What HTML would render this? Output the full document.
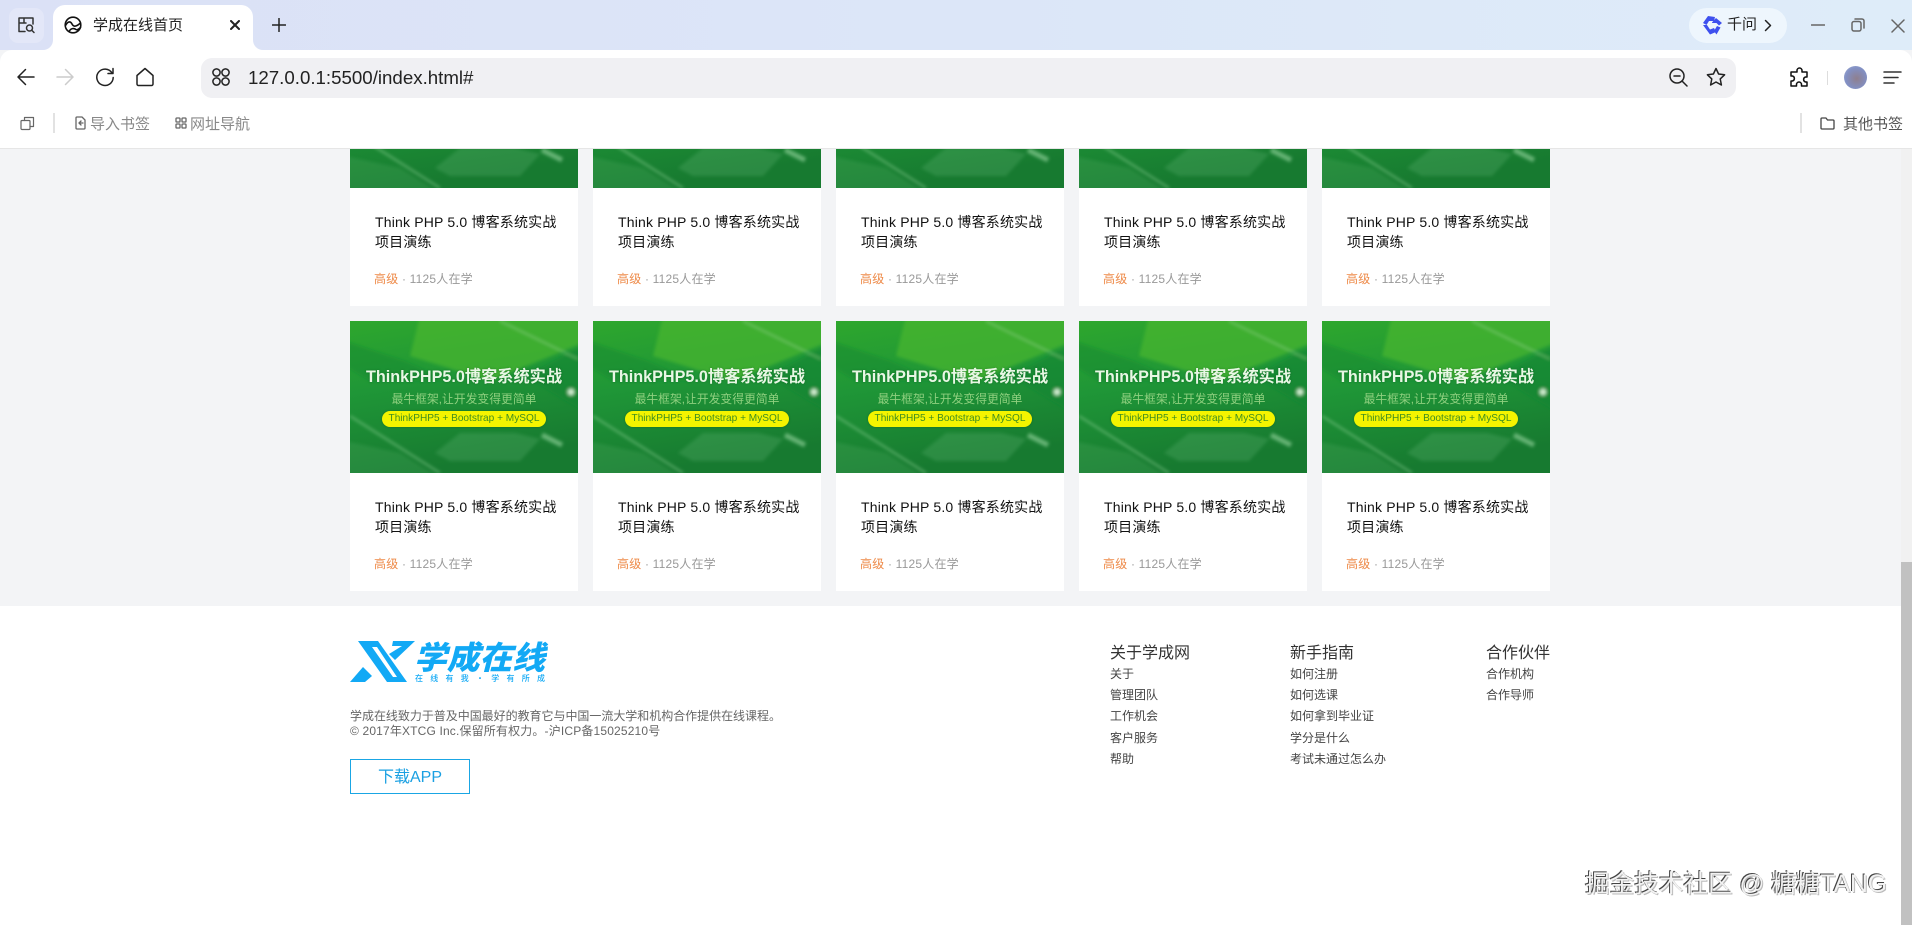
<!DOCTYPE html>
<html lang="zh-CN">
<head>
<meta charset="utf-8">
<title>学成在线首页</title>
<style>
*{margin:0;padding:0;box-sizing:border-box}
html,body{width:1912px;height:925px;overflow:hidden;background:#f3f4f6;font-family:"Liberation Sans","Noto Sans CJK SC",sans-serif}
.abs{position:absolute;white-space:nowrap}
#strip{position:absolute;left:0;top:0;width:1912px;height:50px;background:linear-gradient(90deg,#dbe1f6,#dce6f8 50%,#deecf9)}
#tool{position:absolute;left:0;top:50px;width:1912px;height:99px;background:#fff;border-bottom:1px solid #e6e6e6;border-radius:12px 12px 0 0}
#chrome{position:absolute;left:0;top:0;width:1912px;height:149px;z-index:5}
#tab{position:absolute;left:53px;top:5px;width:200px;height:46px;background:#fff;border-radius:12px 12px 0 0}
#addr{position:absolute;left:201px;top:58px;width:1535px;height:40px;background:#f0f0f3;border-radius:11px}
svg.i{position:absolute;fill:none;stroke:#222;stroke-width:1.5;stroke-linecap:round;stroke-linejoin:round}
.bm{position:absolute;top:115px;font-size:15px;line-height:19px;color:#888;white-space:nowrap}
.card{position:absolute;width:228px;height:270px;background:#fff}
.pic{position:absolute;left:0;top:0;width:228px;height:152px;overflow:hidden;text-align:center;background:#1d9433}
.pic svg{position:absolute;left:0;top:0}
.h{position:absolute;left:0;top:45px;width:228px;font-size:16.2px;line-height:22px;font-weight:700;color:#e8f7e4;white-space:nowrap;text-shadow:0 0 2px rgba(0,70,20,.4)}
.s{position:absolute;left:0;top:71px;width:228px;font-size:11.8px;line-height:15px;color:#8fd07f;white-space:nowrap}
.p{position:absolute;left:32px;top:90px;width:164px;height:16px;border-radius:8px;background:#f4f400;color:#3f8f20;font-size:10.1px;line-height:16px;white-space:nowrap;box-shadow:0 0 2px rgba(20,80,20,.5)}
.t{position:absolute;left:25px;top:176px;width:190px;font-size:14px;line-height:20px;color:#111;letter-spacing:.18px}
.m{position:absolute;left:24px;top:235px;font-size:12px;line-height:16px;color:#999;white-space:nowrap;letter-spacing:.2px}
.m b{font-weight:400;color:#ee8a48}
#foot{position:absolute;left:0;top:606px;width:1901px;height:319px;background:#fff}
.f{position:absolute;font-size:12px;line-height:16px;color:#666;white-space:nowrap}
.fh{position:absolute;font-size:16px;line-height:20px;color:#333;white-space:nowrap}
.fl{position:absolute;font-size:12px;line-height:21.2px;color:#444;white-space:nowrap}
</style>
</head>
<body>
<svg width="0" height="0" style="position:absolute"><defs>
<linearGradient id="g" x1="0" y1="0" x2="0.25" y2="1"><stop offset="0" stop-color="#2ea72d"/><stop offset=".45" stop-color="#1f9637"/><stop offset="1" stop-color="#177a30"/></linearGradient>
<filter id="b" x="-10%" y="-10%" width="120%" height="120%"><feGaussianBlur stdDeviation="1.6"/></filter>
<symbol id="art" viewBox="0 0 228 152">
<rect width="228" height="152" fill="url(#g)"/>
<g filter="url(#b)">
<polygon points="70,-5 233,-5 233,22 140,60 60,35" fill="#49b72e" opacity=".7"/>
<polygon points="-5,20 55,40 100,60 20,60 -5,45" fill="#148a30" opacity=".5"/>
<polygon points="233,25 233,90 175,55" fill="#128533" opacity=".6"/>
<polygon points="85,132 110,112 165,112 190,118 170,140 100,140" fill="#5cb06d" opacity=".3"/>
<polygon points="-5,120 50,132 90,157 -5,157" fill="#4da95e" opacity=".28"/>
<path d="M0 95L90 152" stroke="#8fd296" stroke-width="2.2" opacity=".5"/>
<path d="M192 114L212 124" stroke="#a5e0ac" stroke-width="5" opacity=".55"/>
<path d="M150 0L228 38" stroke="#a5e096" stroke-width="1.5" opacity=".5"/>
<circle cx="221" cy="71" r="3.5" fill="#eefbe8" opacity=".85"/>
</g>
</symbol>
</defs></svg>

<!-- Row 1 -->
<div class="card" style="left:350px;top:36px"><div class="pic"><svg width="228" height="152"><use href="#art"/></svg><div class="h">ThinkPHP5.0博客系统实战</div><div class="s">最牛框架,让开发变得更简单</div><div class="p">ThinkPHP5 + Bootstrap + MySQL</div></div><div class="t">Think PHP 5.0 博客系统实战项目演练</div><div class="m"><b>高级</b> · 1125人在学</div></div>
<div class="card" style="left:593px;top:36px"><div class="pic"><svg width="228" height="152"><use href="#art"/></svg><div class="h">ThinkPHP5.0博客系统实战</div><div class="s">最牛框架,让开发变得更简单</div><div class="p">ThinkPHP5 + Bootstrap + MySQL</div></div><div class="t">Think PHP 5.0 博客系统实战项目演练</div><div class="m"><b>高级</b> · 1125人在学</div></div>
<div class="card" style="left:836px;top:36px"><div class="pic"><svg width="228" height="152"><use href="#art"/></svg><div class="h">ThinkPHP5.0博客系统实战</div><div class="s">最牛框架,让开发变得更简单</div><div class="p">ThinkPHP5 + Bootstrap + MySQL</div></div><div class="t">Think PHP 5.0 博客系统实战项目演练</div><div class="m"><b>高级</b> · 1125人在学</div></div>
<div class="card" style="left:1079px;top:36px"><div class="pic"><svg width="228" height="152"><use href="#art"/></svg><div class="h">ThinkPHP5.0博客系统实战</div><div class="s">最牛框架,让开发变得更简单</div><div class="p">ThinkPHP5 + Bootstrap + MySQL</div></div><div class="t">Think PHP 5.0 博客系统实战项目演练</div><div class="m"><b>高级</b> · 1125人在学</div></div>
<div class="card" style="left:1322px;top:36px"><div class="pic"><svg width="228" height="152"><use href="#art"/></svg><div class="h">ThinkPHP5.0博客系统实战</div><div class="s">最牛框架,让开发变得更简单</div><div class="p">ThinkPHP5 + Bootstrap + MySQL</div></div><div class="t">Think PHP 5.0 博客系统实战项目演练</div><div class="m"><b>高级</b> · 1125人在学</div></div>
<!-- Row 2 -->
<div class="card" style="left:350px;top:321px"><div class="pic"><svg width="228" height="152"><use href="#art"/></svg><div class="h">ThinkPHP5.0博客系统实战</div><div class="s">最牛框架,让开发变得更简单</div><div class="p">ThinkPHP5 + Bootstrap + MySQL</div></div><div class="t">Think PHP 5.0 博客系统实战项目演练</div><div class="m"><b>高级</b> · 1125人在学</div></div>
<div class="card" style="left:593px;top:321px"><div class="pic"><svg width="228" height="152"><use href="#art"/></svg><div class="h">ThinkPHP5.0博客系统实战</div><div class="s">最牛框架,让开发变得更简单</div><div class="p">ThinkPHP5 + Bootstrap + MySQL</div></div><div class="t">Think PHP 5.0 博客系统实战项目演练</div><div class="m"><b>高级</b> · 1125人在学</div></div>
<div class="card" style="left:836px;top:321px"><div class="pic"><svg width="228" height="152"><use href="#art"/></svg><div class="h">ThinkPHP5.0博客系统实战</div><div class="s">最牛框架,让开发变得更简单</div><div class="p">ThinkPHP5 + Bootstrap + MySQL</div></div><div class="t">Think PHP 5.0 博客系统实战项目演练</div><div class="m"><b>高级</b> · 1125人在学</div></div>
<div class="card" style="left:1079px;top:321px"><div class="pic"><svg width="228" height="152"><use href="#art"/></svg><div class="h">ThinkPHP5.0博客系统实战</div><div class="s">最牛框架,让开发变得更简单</div><div class="p">ThinkPHP5 + Bootstrap + MySQL</div></div><div class="t">Think PHP 5.0 博客系统实战项目演练</div><div class="m"><b>高级</b> · 1125人在学</div></div>
<div class="card" style="left:1322px;top:321px"><div class="pic"><svg width="228" height="152"><use href="#art"/></svg><div class="h">ThinkPHP5.0博客系统实战</div><div class="s">最牛框架,让开发变得更简单</div><div class="p">ThinkPHP5 + Bootstrap + MySQL</div></div><div class="t">Think PHP 5.0 博客系统实战项目演练</div><div class="m"><b>高级</b> · 1125人在学</div></div>

<!-- Footer -->
<div id="foot"></div>
<svg class="abs" style="left:350px;top:640px" width="200" height="46" viewBox="0 0 200 46">
<g fill="#12a9f5">
<path fill-rule="evenodd" d="M8 1H28L57 42H37ZM22 7L43 37H47L27 7Z"/>
<polygon points="0,42 13,27 22,36 15,42"/>
<polygon points="43,1 65,1 45,20 39,14 52,6 42,6"/>
</g>
<text x="64" y="29" font-family="'Noto Sans CJK SC',sans-serif" font-size="32" font-weight="900" font-style="italic" fill="#12a9f5" textLength="131" lengthAdjust="spacingAndGlyphs">学成在线</text>
<text x="65" y="41" font-family="'Noto Sans CJK SC',sans-serif" font-size="8" font-weight="500" fill="#12a9f5" textLength="130">在线有我·学有所成</text>
</svg>
<div class="f" style="left:350px;top:708px;letter-spacing:-.03px">学成在线致力于普及中国最好的教育它与中国一流大学和机构合作提供在线课程。</div>
<div class="f" style="left:350px;top:723px;letter-spacing:.16px">© 2017年XTCG Inc.保留所有权力。-沪ICP备15025210号</div>
<div class="abs" style="left:350px;top:759px;width:120px;height:35px;border:1px solid #1aa6e4;color:#1aa0e2;font-size:16px;line-height:35px;text-align:center">下载APP</div>
<div class="fh" style="left:1110px;top:644px">关于学成网</div>
<div class="fl" style="left:1110px;top:664px">关于<br>管理团队<br>工作机会<br>客户服务<br>帮助</div>
<div class="fh" style="left:1290px;top:644px">新手指南</div>
<div class="fl" style="left:1290px;top:664px">如何注册<br>如何选课<br>如何拿到毕业证<br>学分是什么<br>考试未通过怎么办</div>
<div class="fh" style="left:1486px;top:644px">合作伙伴</div>
<div class="fl" style="left:1486px;top:664px">合作机构<br>合作导师</div>

<!-- Scrollbar -->
<div class="abs" style="left:1901px;top:149px;width:11px;height:776px;background:#f1f1f1"></div>
<div class="abs" style="left:1901px;top:562px;width:11px;height:363px;background:#c1c1c1"></div>

<!-- Watermark -->
<div class="abs" style="left:1585px;top:869px;font-size:24.6px;line-height:32px;color:#f2f2f2;text-shadow:-1px -1px 0 #444,1px 1px 0 #bbb;z-index:6">掘金技术社区 @ 糖糖TANG</div>

<!-- Browser chrome -->
<div id="chrome">
<div id="strip"></div>
<div class="abs" style="left:9px;top:8px;width:35px;height:35px;border-radius:9px;background:#e3e7f8"></div>
<svg class="i" style="left:17px;top:16px;stroke:#333" width="19" height="18" viewBox="0 0 19 18"><path d="M8 15.5H2V2H16V8M2 7H9M7 2V7"/><circle cx="12.5" cy="12" r="3"/><path d="M15 14.5L17 16.5"/></svg>
<div id="tool"></div>
<div id="tab"></div>
<svg class="abs" style="left:43px;top:40px" width="10" height="10"><path d="M0 10A10 10 0 0 0 10 0V10Z" fill="#fff"/></svg>
<svg class="abs" style="left:253px;top:40px" width="10" height="10"><path d="M10 10A10 10 0 0 1 0 0V10Z" fill="#fff"/></svg>
<svg class="i" style="left:64px;top:16px;stroke:#111;stroke-width:1.6" width="18" height="18" viewBox="0 0 18 18"><circle cx="9" cy="9" r="7.8"/><path d="M1.5 9.5C4 5 6.5 5 8 8S12 11 16.5 7M5 15.5C7 12 10 12 12 13.5C13.5 14.5 15 13 16.5 11.5"/></svg>
<div class="abs" style="left:93px;top:15px;font-size:15px;line-height:21px;color:#222">学成在线首页</div>
<svg class="i" style="left:230px;top:20px;stroke:#222;stroke-width:2" width="10" height="10" viewBox="0 0 10 10"><path d="M1 1L9 9M9 1L1 9"/></svg>
<svg class="i" style="left:272px;top:18px;stroke:#222" width="14" height="14" viewBox="0 0 14 14"><path d="M7 0.5V13.5M0.5 7H13.5"/></svg>

<div class="abs" style="left:1689px;top:8px;width:98px;height:35px;border-radius:18px;background:#eef6fd"></div>
<svg class="abs" style="left:1702px;top:15px" width="20" height="20" viewBox="0 0 20 20"><g fill="#3e50ee"><path d="M6 1L13 2L12 6L7 6L4.5 10L1 8Z"/><path d="M14 3L20 8L17 10.5L14.5 8L10 8L10 7.5Z"/><path d="M1 10L5 10L8 14.5L12 13L14 17L8 19.5Z"/><path d="M15 11L18.5 12.5L14.5 19.5L12 16Z"/></g></svg>
<div class="abs" style="left:1727px;top:14px;font-size:15px;line-height:21px;color:#222">千问</div>
<svg class="i" style="left:1764px;top:19px;stroke:#222" width="8" height="13" viewBox="0 0 8 13"><path d="M1.5 1.5L6.5 6.5L1.5 11.5"/></svg>
<svg class="i" style="left:1811px;top:24px;stroke:#666" width="14" height="2" viewBox="0 0 14 2"><path d="M0.5 1H13.5"/></svg>
<svg class="i" style="left:1851px;top:18px;stroke:#666" width="14" height="14" viewBox="0 0 14 14"><rect x="1" y="3.5" width="9" height="9.5" rx="2"/><path d="M4 1H11A2 2 0 0 1 13 3V10"/></svg>
<svg class="i" style="left:1891px;top:19px;stroke:#666" width="14" height="14" viewBox="0 0 14 14"><path d="M1 1L13 13M13 1L1 13"/></svg>

<svg class="i" style="left:16px;top:67px;stroke:#222" width="20" height="20" viewBox="0 0 20 20"><path d="M18 10H2M9.5 2.5L2 10L9.5 17.5"/></svg>
<svg class="i" style="left:55px;top:67px;stroke:#ccc" width="20" height="20" viewBox="0 0 20 20"><path d="M2 10H18M10.5 2.5L18 10L10.5 17.5"/></svg>
<svg class="i" style="left:95px;top:67px;stroke:#222" width="20" height="20" viewBox="0 0 20 20"><path d="M17 6A8.2 8.2 0 1 0 18.2 10.5M18 1.5V6.5H13"/></svg>
<svg class="i" style="left:135px;top:67px;stroke:#222" width="20" height="20" viewBox="0 0 20 20"><path d="M2 8.5L10 1.5L18 8.5V17A1.5 1.5 0 0 1 16.5 18.5H3.5A1.5 1.5 0 0 1 2 17Z"/></svg>

<div id="addr"></div>
<svg class="i" style="left:211px;top:67px;stroke:#222" width="20" height="20" viewBox="0 0 20 20"><circle cx="5.5" cy="5.5" r="3.6"/><circle cx="14.5" cy="5.5" r="3.6"/><circle cx="5.5" cy="14.5" r="3.6"/><circle cx="14.5" cy="14.5" r="3.6"/></svg>
<div class="abs" style="left:248px;top:66px;font-size:18.7px;line-height:23px;color:#222">127.0.0.1:5500/index.html#</div>
<svg class="i" style="left:1669px;top:68px;stroke:#222" width="19" height="19" viewBox="0 0 19 19"><circle cx="8" cy="8" r="7"/><path d="M5 8H11M13 13L18 18"/></svg>
<svg class="i" style="left:1706px;top:67px;stroke:#222" width="20" height="20" viewBox="0 0 20 20"><path d="M10 1.5L12.6 7L18.6 7.8L14.2 11.9L15.4 18L10 15L4.6 18L5.8 11.9L1.4 7.8L7.4 7Z"/></svg>
<svg class="i" style="left:1789px;top:67px;stroke:#111" width="21" height="20" viewBox="0 0 21 20"><path d="M8 3.5A2.5 2.5 0 0 1 13 3.5V5H18V10H16.5A2.6 2.6 0 0 0 16.5 15H18V19H12.5V17.5A2.5 2.5 0 0 0 7.5 17.5V19H2V14H3.5A2.6 2.6 0 0 0 3.5 9H2V5H8Z"/></svg>
<div class="abs" style="left:1827px;top:71px;width:1px;height:14px;background:#ddd"></div>
<div class="abs" style="left:1844px;top:66px;width:23px;height:23px;border-radius:50%;background:radial-gradient(circle at 55% 55%,#8f7f8e,#8290c4 60%,#a9b7da)"></div>
<svg class="i" style="left:1883px;top:70px;stroke:#333" width="19" height="15" viewBox="0 0 19 15"><path d="M1 2H18M1 7.5H15M1 13H11"/></svg>

<svg class="i" style="left:20px;top:116px;stroke:#666;stroke-width:1.2" width="15" height="15" viewBox="0 0 15 15"><rect x="1" y="4.5" width="9" height="9" rx="1"/><path d="M4.5 4.5V1.5H13.5V10.5H10"/></svg>
<div class="abs" style="left:53px;top:113px;width:2px;height:20px;background:#e2e2e2"></div>
<svg class="i" style="left:75px;top:116px;stroke:#666;stroke-width:1.3" width="11" height="14" viewBox="0 0 11 14"><path d="M7 1H2A1 1 0 0 0 1 2V12A1 1 0 0 0 2 13H9A1 1 0 0 0 10 12V4ZM8 7H4.5M6 5L4 7L6 9"/></svg>
<div class="bm" style="left:90px">导入书签</div>
<svg class="i" style="left:175px;top:117px;stroke:#666;stroke-width:1.3" width="12" height="12" viewBox="0 0 12 12"><rect x="1" y="1" width="4" height="4" rx=".8"/><rect x="7" y="1" width="4" height="4" rx=".8"/><rect x="1" y="7" width="4" height="4" rx=".8"/><rect x="7" y="7" width="4" height="4" rx=".8"/></svg>
<div class="bm" style="left:190px">网址导航</div>
<div class="abs" style="left:1800px;top:113px;width:2px;height:20px;background:#e2e2e2"></div>
<svg class="i" style="left:1820px;top:117px;stroke:#444;stroke-width:1.3" width="15" height="13" viewBox="0 0 15 13"><path d="M1 2A1 1 0 0 1 2 1H6L7.5 3H13A1 1 0 0 1 14 4V11A1 1 0 0 1 13 12H2A1 1 0 0 1 1 11Z"/></svg>
<div class="bm" style="left:1843px;color:#555">其他书签</div>
</div>
</body>
</html>
